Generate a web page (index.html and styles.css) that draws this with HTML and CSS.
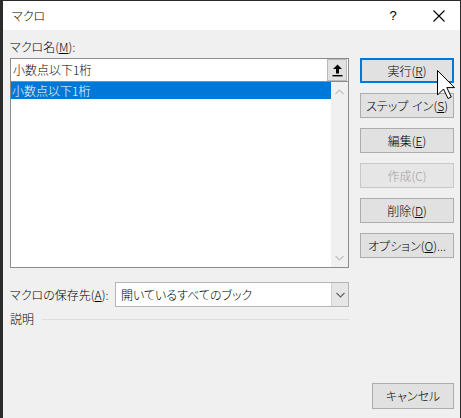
FILE: index.html
```html
<!DOCTYPE html>
<html lang="ja">
<head>
<meta charset="utf-8">
<link rel="stylesheet" href="styles.css">
</head>
<body>
<div class="window">
  <div class="titlebar">
    <span class="title">マクロ</span>
    <span class="tb-help">?</span>
    <span class="tb-close">
      <svg width="12" height="12" viewBox="0 0 12 12"><path d="M0.5 0.5 L11.5 11.5 M11.5 0.5 L0.5 11.5" stroke="#000" stroke-width="1.1" fill="none"/></svg>
    </span>
  </div>
  <div class="content">
    <div class="left">
      <div class="label">マクロ名(<u>M</u>):</div>
      <div class="namebox">
        <span class="nametext">小数点以下1桁</span>
        <span class="upbtn">
          <svg width="11" height="13" viewBox="0 0 11 13"><path d="M5.5 0.5 L10 5 L7 5 L7 9.5 L4 9.5 L4 5 L1 5 Z" fill="#000"/><rect x="0.5" y="11" width="10" height="1.4" fill="#000"/></svg>
        </span>
      </div>
      <div class="list">
        <div class="items">
          <div class="item selected">小数点以下1桁</div>
        </div>
        <div class="vscroll">
          <svg class="chev" width="9" height="6" viewBox="0 0 9 6"><path d="M0.5 5 L4.5 1 L8.5 5" stroke="#c2c2c2" stroke-width="1.2" fill="none"/></svg>
          <svg class="chev" width="9" height="6" viewBox="0 0 9 6"><path d="M0.5 1 L4.5 5 L8.5 1" stroke="#c2c2c2" stroke-width="1.2" fill="none"/></svg>
        </div>
      </div>
      <div class="saverow">
        <span class="savelabel">マクロの保存先(<u>A</u>):</span>
        <div class="combo">
          <span class="combotext">開いているすべてのブック</span>
          <span class="combobtn">
            <svg width="9" height="6" viewBox="0 0 9 6"><path d="M0.5 1 L4.5 5 L8.5 1" stroke="#606060" stroke-width="1.1" fill="none"/></svg>
          </span>
        </div>
      </div>
      <div class="descrow">
        <span class="desclabel">説明</span>
        <span class="descline"></span>
      </div>
    </div>
    <div class="right">
      <div class="btn default">実行(<u>R</u>)</div>
      <div class="btn">ステップ<span class="sp"> </span>イン(<u>S</u>)</div>
      <div class="btn">編集(<u>E</u>)</div>
      <div class="btn disabled">作成(C)</div>
      <div class="btn">削除(<u>D</u>)</div>
      <div class="btn">オプション(<u>O</u>)...</div>
      <div class="btn cancel">キャンセル</div>
    </div>
  </div>
  <svg class="cursor" width="19" height="30" viewBox="0 0 19 30"><path d="M0.5 0.5 L0.5 25 L6.5 19 L11 28.5 L14.3 27 L9.8 17.6 L17.5 17.6 Z" fill="#fff" stroke="#000" stroke-width="1" stroke-linejoin="miter"/></svg>
</div>
</body>
</html>
```
FILE: styles.css
```css
* { box-sizing: border-box; }
html, body {
  margin: 0;
  padding: 0;
  background: #f0f0f0;
}
body {
  font-family: "Noto Sans CJK JP", "Noto Sans", sans-serif;
  font-size: 12px;
  font-weight: 300;
  font-feature-settings: "palt";
  color: #000;
}
u { text-decoration: underline; text-underline-offset: 1px; }

.window {
  position: relative;
  width: 461px;
  height: 418px;
  border-top: 1px solid #2b2b2b;
  border-left: 3px solid #2b2b2b;
  border-right: 1px solid #2b2b2b;
  background: #f0f0f0;
  overflow: hidden;
}

.titlebar {
  height: 29px;
  background: #fff;
  display: flex;
  align-items: center;
  padding-left: 9px;
}
.title { flex: 1; line-height: 16px; }
.tb-help {
  width: 20px;
  font-size: 13px;
  margin-right: 30px;
  text-align: center;
  font-family: "Liberation Sans", sans-serif;
}
.tb-close {
  width: 12px;
  height: 12px;
  margin-right: 15px;
  display: flex;
}

.content {
  height: 388px;
  display: flex;
  padding: 8px 6px 9px 7px;
  gap: 11px;
}

.left {
  width: 339px;
  display: flex;
  flex-direction: column;
}
.label {
  line-height: 18px;
  height: 18px;
  margin-bottom: 2px;
}
.namebox {
  height: 24px;
  background: #fff;
  border: 1px solid #8c8c8c;
  display: flex;
  align-items: center;
  padding-left: 2px;
}
.nametext { flex: 1; line-height: 16px; }
.upbtn {
  width: 20px;
  height: 22px;
  margin-right: 1px;
  background: #e1e1e1;
  border: 1px solid #b8b8b8;
  display: flex;
  align-items: center;
  justify-content: center;
}
.list {
  margin-top: -1px;
  height: 187px;
  background: #fff;
  border: 1px solid #8c8c8c;
  display: flex;
}
.items { flex: 1; }
.item {
  height: 17px;
  line-height: 17px;
  padding-left: 1px;
}
.item.selected { background: #0078d7; color: #fff; }
.vscroll {
  width: 17px;
  background: #f0f0f0;
  display: flex;
  flex-direction: column;
  justify-content: space-between;
  align-items: center;
  padding: 7px 0 6px;
}

.saverow {
  margin-top: 14px;
  display: flex;
  align-items: center;
}
.savelabel { flex: 1; line-height: 18px; }
.combo {
  width: 234px;
  height: 25px;
  background: #fff;
  border: 1px solid #b4b4b4;
  display: flex;
  align-items: center;
  padding-left: 5px;
}
.combotext { flex: 1; line-height: 16px; }
.combobtn {
  width: 17px;
  height: 23px;
  background: #e6e6e6;
  border-left: 1px solid #d0d0d0;
  display: flex;
  align-items: center;
  justify-content: center;
}

.descrow {
  margin-top: 3px;
  display: flex;
  align-items: center;
  gap: 8px;
}
.desclabel { line-height: 18px; }
.descline {
  flex: 1;
  height: 1px;
  background: #dcdcdc;
}

.right {
  width: 94px;
  display: flex;
  flex-direction: column;
  gap: 10px;
  padding-top: 20px;
}
.btn {
  height: 25px;
  background: #e1e1e1;
  border: 1px solid #adadad;
  display: flex;
  align-items: center;
  justify-content: center;
  line-height: 16px;
  white-space: pre;
}
.btn .sp { display: inline-block; width: 4px; }
.btn.default {
  border-color: #0078d7;
  box-shadow: inset 0 0 0 1px #0078d7;
}
.btn.disabled {
  background: #e6e6e6;
  border-color: #c8c8c8;
  color: #a0a0a0;
}
.btn.cancel {
  margin-top: auto;
  margin-left: 12px;
  width: 82px;
  height: 26px;
}

.cursor {
  position: absolute;
  left: 434px;
  top: 69px;
}
```
